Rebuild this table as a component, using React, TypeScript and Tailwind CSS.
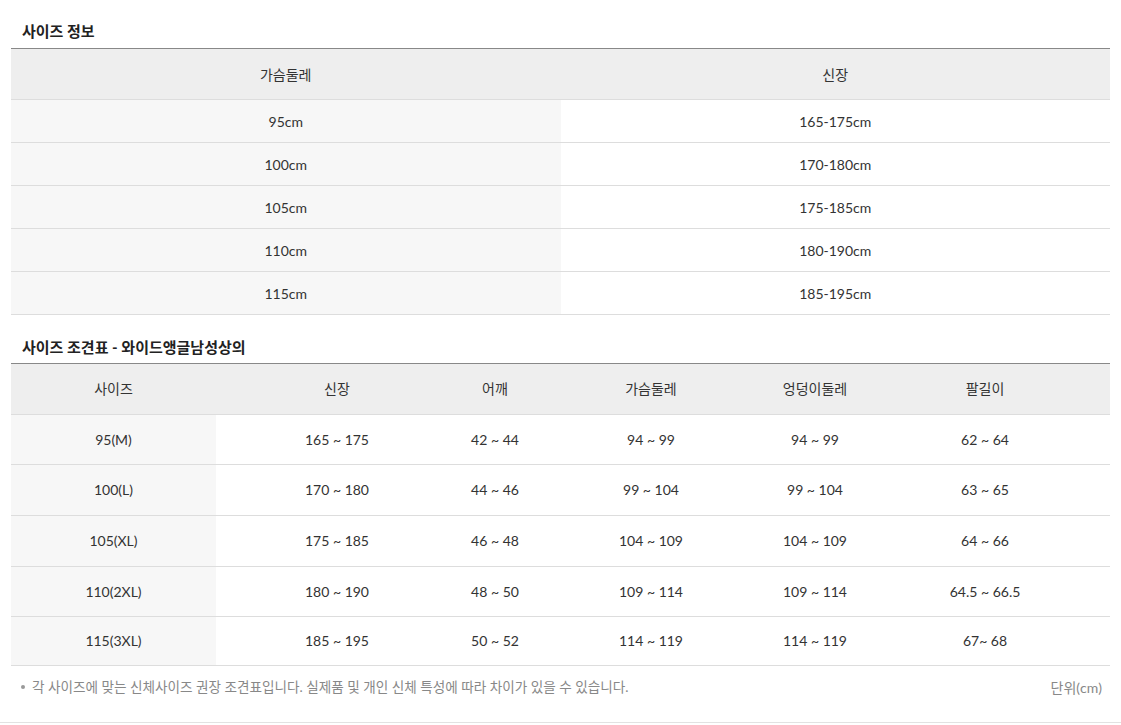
const font = { fontFamily: "Lato, 'Noto Sans CJK KR', sans-serif" };

const infoRows = [
  ["95cm", "165-175cm"],
  ["100cm", "170-180cm"],
  ["105cm", "175-185cm"],
  ["110cm", "180-190cm"],
  ["115cm", "185-195cm"],
];

const sizeHead = ["사이즈", "신장", "어깨", "가슴둘레", "엉덩이둘레", "팔길이"];
const colWidths = ["w-[205px]", "w-[242px]", "w-[74px]", "w-[238px]", "w-[90px]", "w-[250px]"];
const rowHeights = ["h-[50px]", "h-[51px]", "h-[51px]", "h-[50px]", "h-[49px]"];

const sizeRows = [
  ["95(M)", "165 ~ 175", "42 ~ 44", "94 ~ 99", "94 ~ 99", "62 ~ 64"],
  ["100(L)", "170 ~ 180", "44 ~ 46", "99 ~ 104", "99 ~ 104", "63 ~ 65"],
  ["105(XL)", "175 ~ 185", "46 ~ 48", "104 ~ 109", "104 ~ 109", "64 ~ 66"],
  ["110(2XL)", "180 ~ 190", "48 ~ 50", "109 ~ 114", "109 ~ 114", "64.5 ~ 66.5"],
  ["115(3XL)", "185 ~ 195", "50 ~ 52", "114 ~ 119", "114 ~ 119", "67~ 68"],
];

export default function App() {
  return (
    <div className="w-[1121px] bg-white text-[#333]" style={font}>
      <div className="px-[11px]">
        {/* 사이즈 정보 */}
        <h2 className="pt-[22px] pb-[8px] px-[11px] text-[15px] font-bold leading-[18px] text-[#222]">
          사이즈 정보
        </h2>
        <table className="w-full table-fixed border-collapse text-[14px] border-t border-[#888]">
          <thead>
            <tr className="h-[51px] bg-[#eeeeee]">
              <th className="font-normal w-1/2">가슴둘레</th>
              <th className="font-normal w-1/2">신장</th>
            </tr>
          </thead>
          <tbody>
            {infoRows.map((r) => (
              <tr key={r[0]} className="h-[43px] border-t border-[#dddddd]">
                <td className="text-center bg-[#f7f7f7]">{r[0]}</td>
                <td className="text-center">{r[1]}</td>
              </tr>
            ))}
            <tr className="border-t border-[#dddddd]" />
          </tbody>
        </table>

        {/* 사이즈 조견표 */}
        <h2 className="pt-[23px] pb-[7px] px-[11px] text-[15px] font-bold leading-[18px] text-[#222]">
          사이즈 조견표 - 와이드앵글남성상의
        </h2>
        <table className="w-full table-fixed border-collapse text-[14px] border-t border-[#888]">
          <thead>
            <tr className="h-[51px] bg-[#eeeeee]">
              {sizeHead.map((h, i) => (
                <th key={h} className={`font-normal ${colWidths[i]}`}>
                  {h}
                </th>
              ))}
            </tr>
          </thead>
          <tbody>
            {sizeRows.map((r, ri) => (
              <tr key={r[0]} className={`${rowHeights[ri]} border-t border-[#dddddd]`}>
                {r.map((c, i) => (
                  <td key={i} className={`text-center ${i === 0 ? "bg-[#f7f7f7]" : ""}`}>
                    {c}
                  </td>
                ))}
              </tr>
            ))}
            <tr className="border-t border-[#dddddd]" />
          </tbody>
        </table>

        <div className="flex justify-between items-center h-[44px] pl-[10px] pr-[8px] text-[13.6px] text-[#888]">
          <p className="flex items-center gap-[7px]">
            <span className="w-[4px] h-[4px] rounded-full bg-[#999]" />
            각 사이즈에 맞는 신체사이즈 권장 조견표입니다. 실제품 및 개인 신체 특성에 따라 차이가 있을 수 있습니다.
          </p>
          <span className="text-[14px]">단위(cm)</span>
        </div>
      </div>
      <div className="mt-[13px] border-t border-[#e2e2e2]" />
    </div>
  );
}
